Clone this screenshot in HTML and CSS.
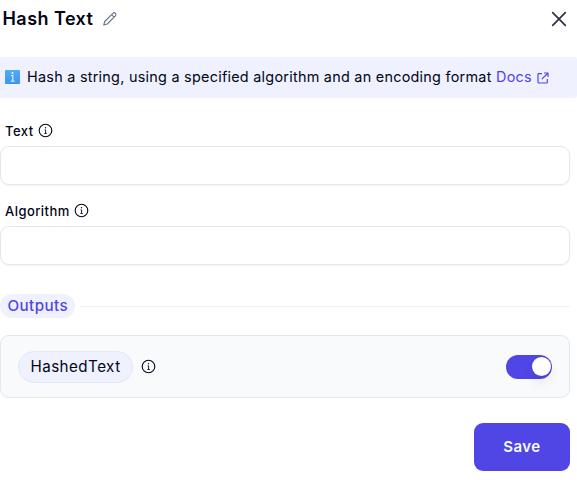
FILE: index.html
```html
<!DOCTYPE html>
<html lang="en">
<head>
<meta charset="utf-8">
<title>Hash Text</title>
<link rel="stylesheet" href="styles.css">
</head>
<body>
<svg width="0" height="0" class="defs">
  <symbol id="info" viewBox="0 0 16 16"><circle cx="7.5" cy="7.5" r="6.3" fill="none" stroke="currentColor" stroke-width="1.1"/><circle cx="7.5" cy="4.8" r=".7" fill="currentColor"/><path d="M6.6 6.9H7.6V10.3M6.4 10.5H8.8" fill="none" stroke="currentColor" stroke-width=".9"/></symbol>
</svg>
<header class="header">
  <h1 class="title">Hash Text</h1>
  <svg class="pencil" viewBox="0 0 16 16"><path d="M1.8 14L2.7 10.5L10.9 2.3Q12.2 1.1 13.4 2.3Q14.6 3.5 13.4 4.8L5.2 13ZM9.6 3.7L12 6.1" /></svg>
  <svg class="close" viewBox="0 0 16 16"><path d="M1.7 1.7L14.3 14.3M14.3 1.7L1.7 14.3"/></svg>
</header>
<div class="banner">
  <svg class="badge" viewBox="0 0 15 14"><defs><linearGradient id="blue" x2="0" y2="1"><stop stop-color="#50adf8"/><stop offset="1" stop-color="#3c94ee"/></linearGradient></defs><rect width="15" height="14" rx="1" fill="url(#blue)"/><circle cx="7.5" cy="2.9" r="1" fill="#fff"/><path d="M6 5.5H7.8V11M5.8 11.2H9.6" fill="none" stroke="#e8f4ff" stroke-width="1.1"/></svg>
  <span class="description">Hash a string, using a specified algorithm and an encoding format</span>
  <a class="docs">Docs</a>
  <svg class="external" viewBox="0 0 12 12"><path d="M5 1.7H1.7Q1 1.7 1 2.4V10.3Q1 11 1.7 11H9.6Q10.3 11 10.3 10.3V7M7 1H11V5M11 1L4.8 7.2"/></svg>
</div>
<main class="content">
  <label class="label" for="text">Text <svg class="info"><use href="#info"/></svg></label>
  <input class="input" id="text">
  <label class="label second" for="algorithm">Algorithm <svg class="info"><use href="#info"/></svg></label>
  <input class="input" id="algorithm">
  <div class="divider"><span class="section">Outputs</span></div>
  <div class="output">
    <span class="chip">HashedText</span>
    <svg class="info"><use href="#info"/></svg>
    <span class="toggle"><span class="knob"></span></span>
  </div>
  <button class="save">Save</button>
</main>
</body>
</html>
```

FILE: styles.css
```css
* { box-sizing: border-box; }
body { margin: 0; background: #fff; color: #020617; font-family: Inter, sans-serif; letter-spacing: .45px; overflow: hidden; }
.defs { display: block; height: 0; }
.header { display: flex; align-items: center; height: 57px; padding: 0 10px 19px 2px; }
.title { margin: 0; font-size: 18px; line-height: 24px; font-weight: 600; width: 100px; padding-left: .5px; white-space: nowrap; }
.pencil { width: 16px; height: 16px; fill: none; stroke: #64748b; stroke-width: 1.1; stroke-linejoin: round; }
.close { width: 16px; height: 16px; margin-left: auto; fill: none; stroke: #2e3240; stroke-width: 1.7; stroke-linecap: round; }
.banner { display: flex; align-items: center; height: 41px; padding: 0 0 0 5px; background: #eff1ff; border-radius: 0 3px 3px 0; font-size: 14.4px; letter-spacing: .26px; line-height: 20px; white-space: nowrap; }
.badge { width: 15px; height: 14px; margin: 0 7px 1px 0; flex: none; }
.description { width: 469px; padding-bottom: 1px; }
.docs { width: 41px; padding-bottom: 1px; color: #4f46e5; }
.external { width: 12px; height: 12px; margin-top: 1px; fill: none; stroke: #4f46e5; stroke-width: 1.2; stroke-linejoin: round; }
.content { display: flex; flex-direction: column; width: 570px; padding-top: 23px; }
.label { display: flex; align-items: center; gap: 4px; height: 20px; margin-bottom: 5px; padding-left: 5px; font-size: 13px; line-height: 20px; font-weight: 500; }
.info { width: 16px; height: 16px; }
.second { margin-top: 16px; }
.input { width: 570px; height: 39px; border: 1px solid #e2e8f0; border-radius: 9px; outline: 0; padding: 0 12px; background: #fff; box-shadow: 0 1px 2px #0f172a0d; }
.divider { display: flex; align-items: center; gap: 5px; margin-top: 29px; height: 24px; }
.divider::after { content: ""; flex: 1; height: 1px; background: #eff1ff; margin-top: 1px; }
.section { width: 75px; height: 24px; padding-left: 7.5px; border-radius: 12px; background: #eff1ff; color: #4f46e5; font-size: 15.2px; font-weight: 500; line-height: 24px; letter-spacing: .4px; }
.output { display: flex; align-items: center; height: 63px; margin-top: 17px; padding: 0 17px; border: 1px solid #e2e8f0; border-radius: 9px; background: #f8fafc; }
.chip { width: 115px; height: 32px; margin-right: 8px; border: 1px solid #e2e8f0; border-radius: 16px; background: #eff1ff; font-size: 15.2px; line-height: 30px; text-align: center; }
.toggle { display: flex; align-items: center; justify-content: flex-end; width: 46px; height: 24px; margin-left: auto; padding-right: 1px; border-radius: 12px; background: #4f46e5; }
.knob { width: 19px; height: 19px; border-radius: 50%; background: #fff; box-shadow: 0 8px 12px #0f172a10; }
.save { align-self: flex-end; width: 96px; height: 48px; margin-top: 25px; padding: 0; border: 0; border-radius: 9px; background: #4f46e5; color: #f8fafc; font: 600 15px/24px Inter, sans-serif; letter-spacing: .45px; }
```
